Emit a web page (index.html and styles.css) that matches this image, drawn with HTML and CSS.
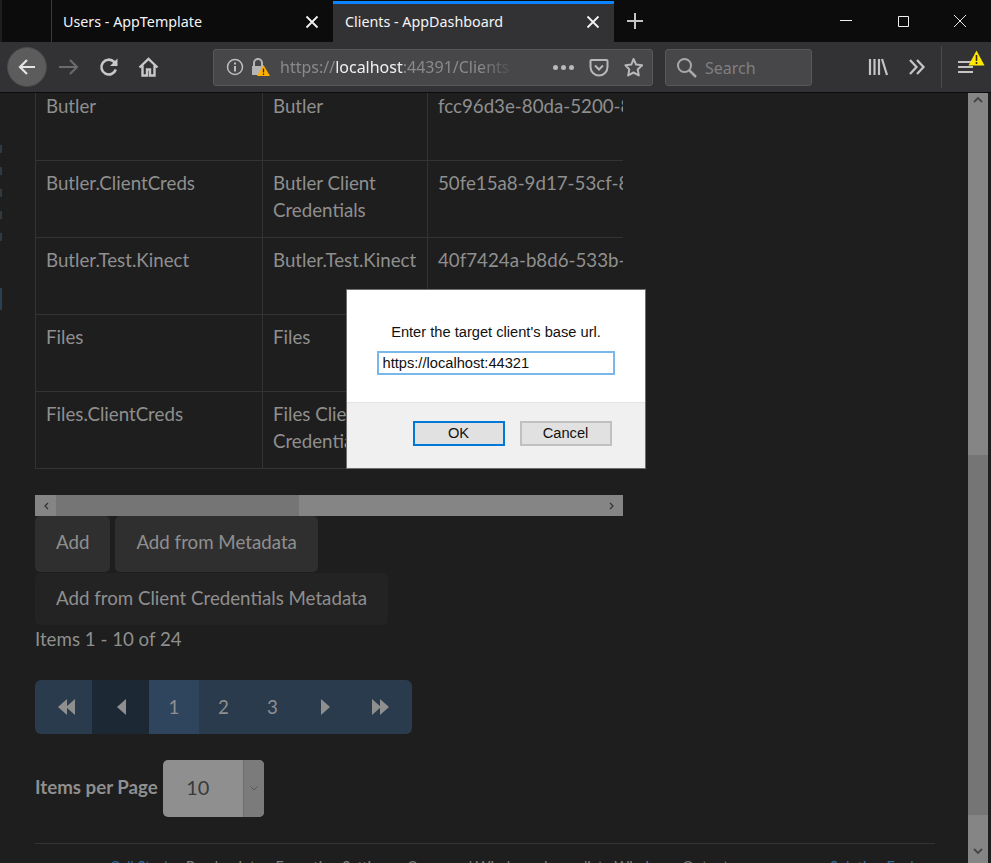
FILE: index.html
```html
<!DOCTYPE html>
<html lang="en">

<head>
  <meta charset="UTF-8">
  <meta name="viewport" content="width=device-width, initial-scale=1.0">
  <title>Clients - AppDashboard</title>

  <link rel="stylesheet" href="styles.css">
</head>

<body>

  <header class="tabbar">
    <div class="tab">
      <span class="tab-title">Users - AppTemplate</span>
      <svg class="tab-close" width="14" height="14" viewBox="0 0 14 14"><path d="M1.500 1.500l11 11M12.500 1.500l-11 11" stroke="#f2f2f2" stroke-width="1.800"/></svg>
    </div>
    <div class="tab tab-active">
      <span class="tab-title">Clients - AppDashboard</span>
      <svg class="tab-close" width="14" height="14" viewBox="0 0 14 14"><path d="M1.500 1.500l11 11M12.500 1.500l-11 11" stroke="#f2f2f2" stroke-width="1.800"/></svg>
    </div>
    <svg class="new-tab" width="18" height="18" viewBox="0 0 18 18"><path d="M9 1v16M1 9h16" stroke="#c4c4c4" stroke-width="2"/></svg>
    <div class="win-controls">
      <svg width="14" height="14" viewBox="0 0 14 14"><path d="M1 6.500h12" stroke="#f0f0f0"/></svg>
      <svg width="14" height="14" viewBox="0 0 14 14"><path d="M2.500 2.500h10v10h-10z" fill="none" stroke="#f0f0f0"/></svg>
      <svg width="14" height="14" viewBox="0 0 14 14"><path d="M1 1l12 12M13 1L1 13" stroke="#e8e8e8"/></svg>
    </div>
  </header>

  <nav class="toolbar">
    <button class="nav-btn back">
      <svg width="20" height="20" viewBox="0 0 20 20"><path d="M18 10H3M10 3l-7 7 7 7" fill="none" stroke="#e4e4e4" stroke-width="2.200"/></svg>
    </button>
    <button class="nav-btn forward">
      <svg width="22" height="20" viewBox="0 0 22 20"><path d="M1 10h18M12 3l7 7-7 7" fill="none" stroke="#6a6a6b" stroke-width="2.200"/></svg>
    </button>
    <button class="nav-btn">
      <svg width="20" height="20" viewBox="0 0 20 20"><path d="M16.800 12.500A7.400 7.400 0 1 1 15 4.800l2 2" fill="none" stroke="#c8c8c8" stroke-width="2.600"/><path d="M18.500 1.500v7.500H11z" fill="#c8c8c8"/></svg>
    </button>
    <button class="nav-btn home">
      <svg width="21" height="20" viewBox="0 0 21 20"><path d="M1.500 10.500l9-8.500 9 8.500M4.500 8.500V18.500h4.500v-6h3v6h4.500V8.500" fill="none" stroke="#c8c8c8" stroke-width="2.400"/></svg>
    </button>

    <div class="urlbar">
      <svg width="18" height="18" viewBox="0 0 18 18"><circle cx="9" cy="9" r="7.500" fill="none" stroke="#bdbdbd" stroke-width="1.500"/><path d="M9 8v5.500M9 4.500v2" stroke="#bdbdbd" stroke-width="2"/></svg>
      <svg class="lock" width="20" height="20" viewBox="0 0 20 20">
        <path d="M4 9V6a4 4 0 0 1 8 0v3" fill="none" stroke="#b5b5b5" stroke-width="2"/>
        <path d="M2 9h12v9H2z" fill="#b5b5b5"/>
        <path d="M13.500 8l6.500 11H7z" fill="#ffb000"/>
        <path d="M13.500 11.500v4M13.500 16.500v1.500" stroke="#3a2a00" stroke-width="1.300"/>
      </svg>
      <span class="url"><span class="url-dim">https://</span><span class="url-host">localhost</span><span class="url-dim">:44391/Clients</span></span>
      <span class="url-dots"><i></i><i></i><i></i></span>
      <svg class="pocket" width="20" height="19" viewBox="0 0 20 19"><path d="M2.500 2h15a1 1 0 0 1 1 1v6a8.500 8.500 0 0 1-17 0V3a1 1 0 0 1 1-1z" fill="none" stroke="#b8b8b8" stroke-width="2"/><path d="M6 7.500l4 4 4-4" fill="none" stroke="#b8b8b8" stroke-width="2"/></svg>
      <svg class="star" width="21" height="20" viewBox="0 0 21 20"><path d="M10.500 2l2.600 5.500 6 .800-4.400 4.100 1.100 6-5.300-2.900-5.300 2.900 1.100-6L2.400 8.300l6-.800z" fill="none" stroke="#b8b8b8" stroke-width="2" stroke-linejoin="round"/></svg>
    </div>

    <div class="searchbar">
      <svg width="21" height="21" viewBox="0 0 21 21"><circle cx="8.500" cy="8.500" r="6.500" fill="none" stroke="#a8a8a8" stroke-width="2"/><path d="M13 13l7 7" stroke="#a8a8a8" stroke-width="2.500"/></svg>
      <span>Search</span>
    </div>

    <div class="tools">
      <svg width="20" height="18" viewBox="0 0 20 18"><path d="M2 1v16M6.500 1v16M11 1v16M14 1l5 16" stroke="#c4c4c4" stroke-width="2.200" fill="none"/></svg>
      <svg class="chevrons" width="18" height="16" viewBox="0 0 18 16"><path d="M2 1l6.500 7L2 15M9 1l6.500 7L9 15" fill="none" stroke="#c4c4c4" stroke-width="2.300"/></svg>
      <div class="tool-sep"></div>
      <div class="menu">
        <svg width="16" height="14" viewBox="0 0 16 14"><path d="M0 2h15M0 7h15M0 12h15" stroke="#c4c4c4" stroke-width="2"/></svg>
        <svg class="menu-warn" width="17" height="16" viewBox="0 0 17 16"><path d="M8.500 .5l8 15H.5z" fill="#ffe900"/><path d="M8.500 5v6M8.500 12v2" stroke="#3e2800" stroke-width="1.600"/></svg>
      </div>
    </div>
  </nav>

  <main class="viewport">
    <div class="edge">
      <i></i><i></i><i></i><i></i><i></i>
      <i class="edge-blue"></i>
    </div>

    <div class="page">
      <div class="table-wrap">
        <table class="grid">
          <tr>
            <td>Butler</td>
            <td>Butler</td>
            <td>fcc96d3e-80da-5200-8a1c-7d2f10b4c6e1</td>
          </tr>
          <tr>
            <td>Butler.ClientCreds</td>
            <td>Butler Client Credentials</td>
            <td>50fe15a8-9d17-53cf-8e42-1b6a90c37d25</td>
          </tr>
          <tr>
            <td>Butler.Test.Kinect</td>
            <td>Butler.Test.Kinect</td>
            <td>40f7424a-b8d6-533b-9c05-e2d71f8a6b34</td>
          </tr>
          <tr>
            <td>Files</td>
            <td>Files</td>
            <td>7ab3c210-4e6f-5d18-a2b7-90c4de1f3a68</td>
          </tr>
          <tr>
            <td>Files.ClientCreds</td>
            <td>Files Client Credentials</td>
            <td>c18e5f02-6b3d-5a47-8f91-3d07ac2e4b59</td>
          </tr>
        </table>
      </div>

      <div class="hscroll">
        <svg class="hscroll-arrow" width="6" height="8" viewBox="0 0 6 8"><path d="M5 1L2 4l3 3" fill="none" stroke="#333" stroke-width="1.300"/></svg>
        <div class="hscroll-thumb"></div>
        <svg class="hscroll-arrow" width="6" height="8" viewBox="0 0 6 8"><path d="M1 1l3 3-3 3" fill="none" stroke="#333" stroke-width="1.300"/></svg>
      </div>

      <div class="actions">
        <button class="btn">Add</button>
        <button class="btn">Add from Metadata</button>
      </div>
      <button class="btn btn-flat">Add from Client Credentials Metadata</button>

      <p class="items-count">Items 1 - 10 of 24</p>

      <div class="pager">
        <a class="pg pg-arrow pg-first">
          <svg width="19" height="16" viewBox="0 0 19 16"><path d="M10 0v16L1 8zM18 0v16L9 8z" fill="#8f8f8f"/></svg>
        </a>
        <a class="pg pg-arrow pg-disabled">
          <svg width="10" height="16" viewBox="0 0 10 16"><path d="M10 0v16L1 8z" fill="#8f8f8f"/></svg>
        </a>
        <a class="pg pg-num pg-current">1</a>
        <a class="pg pg-num">2</a>
        <a class="pg pg-num">3</a>
        <a class="pg pg-arrow">
          <svg width="10" height="16" viewBox="0 0 10 16"><path d="M0 0v16l9-8z" fill="#8f8f8f"/></svg>
        </a>
        <a class="pg pg-arrow pg-last">
          <svg width="19" height="16" viewBox="0 0 19 16"><path d="M1 0v16l9-8zM9 0v16l9-8z" fill="#8f8f8f"/></svg>
        </a>
      </div>

      <div class="per-page">
        <label>Items per Page</label>
        <div class="select">
          <span class="select-value">10</span>
          <span class="select-arrow">
            <svg width="8" height="5" viewBox="0 0 8 5"><path d="M.5.5L4 4 7.500.5" fill="none" stroke="#555"/></svg>
          </span>
        </div>
      </div>

      <hr class="rule">

      <div class="behind">
        <span class="behind-link">Call Stack</span>
        <span>Breakpoints</span>
        <span>Exception Settings</span>
        <span>Command Window</span>
        <span>Immediate Window</span>
        <span>Output</span>
        <span class="behind-link behind-right">Solution Explorer</span>
      </div>
    </div>

    <div class="vscroll">
      <svg width="10" height="7" viewBox="0 0 10 7"><path d="M1 6l4-4 4 4" fill="none" stroke="#444" stroke-width="1.800"/></svg>
      <div class="vscroll-thumb"></div>
      <svg width="10" height="7" viewBox="0 0 10 7"><path d="M1 1l4 4 4-4" fill="none" stroke="#444" stroke-width="1.800"/></svg>
    </div>

    <div class="dialog">
      <div class="dialog-body">
        <p>Enter the target client's base url.</p>
        <input type="text" value="https://localhost:44321">
      </div>
      <div class="dialog-foot">
        <button class="dlg-btn dlg-default">OK</button>
        <button class="dlg-btn">Cancel</button>
      </div>
    </div>
  </main>

</body>

</html>
```

FILE: styles.css
```css
* {
  box-sizing: border-box;
}

html,
body {
  margin: 0;
  height: 863px;
  overflow: hidden;
}

body {
  display: flex;
  flex-direction: column;
  background-color: #1e1e1e;
  font-family: Lato, "Liberation Sans", sans-serif;
}

/* browser tabs */
.tabbar {
  display: flex;
  align-items: stretch;
  height: 42px;
  padding-left: 49px;
  background-color: #0c0c0d;
  border-left: 2px solid #1e1e1e;
}

.tab {
  display: flex;
  align-items: center;
  justify-content: space-between;
  width: 282px;
  padding: 1px 14px 0 11px;
  border-left: 1px solid #3a3a3c;
  color: #f5f5f5;
  font-family: "Noto Sans", sans-serif;
  font-size: 14.3px;
}

.tab-active {
  width: 281px;
  margin-top: 1px;
  padding: 0 14px 3px 12px;
  border-left: none;
  border-top: 3px solid #0a84ff;
  background-color: #323234;
}

.tab-close {
  margin-top: 1px;
}

.new-tab {
  align-self: center;
  margin-left: 12px;
}

.win-controls {
  display: flex;
  align-items: center;
  gap: 43px;
  margin-left: auto;
  padding-right: 24px;
}

/* browser toolbar */
.toolbar {
  display: flex;
  align-items: center;
  height: 51px;
  padding-left: 7px;
  background-color: #323234;
  border-bottom: 1px solid #0c0c0d;
}

.nav-btn {
  display: flex;
  align-items: center;
  justify-content: center;
  width: 40px;
  height: 40px;
  padding: 0;
  border: none;
  border-radius: 50%;
  background: none;
}

.back {
  background-color: #5c5c5d;
  border: 1px solid #4a4a4b;
}

.forward {
  margin-left: 2px;
}

.home {
  margin-left: -1px;
}

.urlbar {
  display: flex;
  align-items: center;
  width: 440px;
  height: 37px;
  margin-left: 45px;
  padding: 0 8px 0 12px;
  background-color: #474749;
  border: 1px solid #58585a;
  border-radius: 3px;
}

.lock {
  margin-left: 6px;
  flex-shrink: 0;
}

.url {
  width: 260px;
  margin-left: 10px;
  overflow: hidden;
  white-space: nowrap;
  font-family: "Noto Sans", sans-serif;
  font-size: 16px;
  -webkit-mask-image: linear-gradient(to right, #000 77%, transparent 90%);
  mask-image: linear-gradient(to right, #000 77%, transparent 90%);
}

.url-dim {
  color: #8a8a8c;
}

.url-host {
  color: #f0f0f0;
}

.url-dots {
  display: flex;
  gap: 3px;
  margin-left: 13px;
}

.url-dots i {
  width: 5px;
  height: 5px;
  border-radius: 50%;
  background-color: #b8b8b8;
}

.pocket {
  flex-shrink: 0;
  margin-left: 15px;
}

.star {
  flex-shrink: 0;
  margin-left: 14px;
}

.searchbar {
  display: flex;
  align-items: center;
  gap: 8px;
  width: 147px;
  height: 37px;
  margin-left: 12px;
  padding-left: 10px;
  background-color: #474749;
  border: 1px solid #58585a;
  border-radius: 3px;
  color: #7f7f81;
  font-family: "Noto Sans", sans-serif;
  font-size: 16px;
}

.searchbar span {
  padding-top: 2px;
}

.tools {
  display: flex;
  align-items: center;
  margin-left: 56px;
}

.chevrons {
  margin-left: 20px;
}

.tool-sep {
  width: 1px;
  height: 42px;
  margin: 0 16px 0 15px;
  background-color: #4a4a4c;
}

.menu {
  position: relative;
  display: flex;
}

.menu-warn {
  position: absolute;
  top: -10px;
  left: 10px;
}

/* page area */
.viewport {
  position: relative;
  display: flex;
  flex: 1;
  min-height: 0;
  overflow: hidden;
}

.edge {
  position: absolute;
  top: 52px;
  left: 0;
  display: flex;
  flex-direction: column;
  gap: 14px;
}

.edge i {
  display: block;
  width: 2px;
  height: 8px;
  background-color: #2f3b40;
}

.edge .edge-blue {
  height: 22px;
  margin-top: 33px;
  background-color: #2a4050;
}

.page {
  flex: 1;
  min-width: 0;
  padding-left: 35px;
  color: #8f8f8f;
  font-size: 18.72px;
}

.table-wrap {
  width: 588px;
  margin-top: -10px;
  overflow: hidden;
}

.grid {
  width: 1000px;
  table-layout: fixed;
  border-collapse: collapse;
}

.grid td {
  height: 77px;
  padding: 9px 10px 0 10px;
  vertical-align: top;
  line-height: 27px;
  border: 1px solid #333;
}

.grid td:nth-child(1) {
  width: 227px;
}

.grid td:nth-child(2) {
  width: 165px;
}

.grid td:nth-child(3) {
  white-space: nowrap;
}

.hscroll {
  position: relative;
  display: flex;
  align-items: center;
  justify-content: space-between;
  width: 588px;
  height: 21px;
  margin-top: 26px;
  padding: 0 8px;
  background-color: #858585;
}

.hscroll-thumb {
  position: absolute;
  top: 0;
  left: 21px;
  width: 243px;
  height: 21px;
  background-color: #757575;
}

.actions {
  display: flex;
  gap: 5px;
  margin-bottom: 1px;
}

.btn {
  height: 56px;
  padding: 0 21px 4px;
  border: none;
  border-radius: 5px;
  background-color: #2f2f2f;
  color: #8f8f8f;
  font-family: inherit;
  font-size: 18.72px;
}

.btn-flat {
  display: block;
  height: 52px;
  padding-bottom: 2px;
  background-color: #232323;
}

.items-count {
  margin: 0;
  height: 55px;
  padding-top: 2px;
  line-height: 24px;
}

/* pager */
.pager {
  display: flex;
  width: 377px;
  height: 54px;
  overflow: hidden;
  border-radius: 6px;
  background-color: #2a3b4e;
}

.pg {
  display: flex;
  align-items: center;
  justify-content: center;
  height: 54px;
}

.pg-arrow {
  width: 57px;
}

.pg-first {
  padding-left: 5px;
}

.pg-last {
  padding-right: 4px;
}

.pg-num {
  width: 49px;
  font-size: 18.72px;
}

.pg-disabled {
  background-color: #1c2833;
}

.pg-current {
  width: 50px;
  background-color: #2f455e;
}

.per-page {
  display: flex;
  align-items: center;
  gap: 5px;
  height: 57px;
  margin-top: 26px;
}

.per-page label {
  padding-bottom: 4px;
  font-weight: 700;
}

.select {
  display: flex;
  width: 101px;
  height: 57px;
  overflow: hidden;
  border-radius: 5px;
  background-color: #8f8f8f;
  color: #3a3a3a;
  font-size: 20px;
}

.select-value {
  width: 80px;
  padding-right: 10px;
  line-height: 54px;
  text-align: center;
}

.select-arrow {
  display: flex;
  flex: 1;
  align-items: center;
  justify-content: center;
  background-color: #7b7b7b;
  border-left: 1px solid #6d6d6d;
}

.rule {
  width: 900px;
  height: 1px;
  margin: 26px 0 0;
  border: none;
  background-color: #333;
}

.behind {
  position: relative;
  display: flex;
  gap: 14px;
  margin-top: 15px;
  padding-left: 75px;
  color: #7c7c7c;
  font-size: 14.5px;
  line-height: 16px;
  white-space: nowrap;
}

.behind-link {
  color: #2f6b9a;
}

.behind-right {
  position: absolute;
  left: 795px;
}

/* page scrollbar */
.vscroll {
  position: relative;
  display: flex;
  flex-direction: column;
  align-items: center;
  justify-content: space-between;
  width: 20px;
  margin-right: 3px;
  padding: 3px 0 8px;
  background-color: #858585;
}

.vscroll-thumb {
  position: absolute;
  top: 362px;
  left: 0;
  width: 20px;
  height: 360px;
  background-color: #757575;
}

/* prompt dialog */
.dialog {
  position: absolute;
  top: 196px;
  left: 346px;
  width: 300px;
  height: 180px;
  border: 1px solid #6e6e6e;
  font-family: "Liberation Sans", Arial, sans-serif;
  font-size: 14.67px;
  color: #111;
}

.dialog-body {
  display: flex;
  flex-direction: column;
  align-items: center;
  height: 113px;
  padding-top: 34px;
  background-color: #fff;
  border-bottom: 1px solid #e3e3e3;
}

.dialog-body p {
  margin: 0 0 10px;
  line-height: 17px;
}

.dialog-body input {
  width: 238px;
  height: 24px;
  margin-right: 1px;
  padding: 0 4px;
  border: 2px solid #7ab8ec;
  color: #111;
  font: inherit;
}

.dialog-foot {
  display: flex;
  gap: 15px;
  height: 65px;
  padding: 18px 0 0 66px;
  background-color: #f0f0f0;
}

.dlg-btn {
  width: 92px;
  height: 25px;
  padding: 0 1px 2px 0;
  border: 2px solid #c0c0c0;
  background-color: #e1e1e1;
  color: #111;
  font: inherit;
}

.dlg-default {
  border-color: #0078d7;
}
```
